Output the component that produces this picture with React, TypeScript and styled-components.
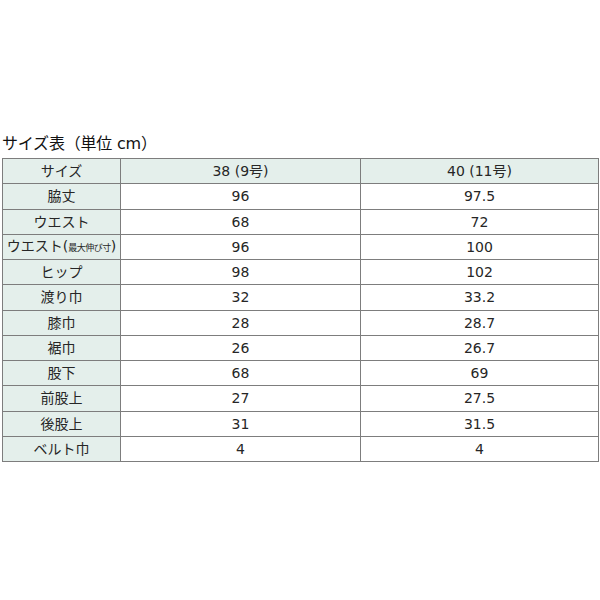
import styled, { createGlobalStyle } from "styled-components";

const GlobalStyle = createGlobalStyle`
  html, body {
    margin: 0;
    padding: 0;
    background: #fff;
  }
  body {
    font-family: "DejaVu Sans", "Noto Sans CJK JP", sans-serif;
    color: #222;
  }
`;

const Page = styled.div`
  width: 600px;
  height: 600px;
  padding: 133px 3px 0 2px;
  box-sizing: border-box;
`;

const Title = styled.h2`
  margin: 0 0 4px 0;
  font-size: 16px;
  font-weight: normal;
  line-height: 21px;
  color: #111;
  letter-spacing: -0.2px;
`;

const Table = styled.table`
  width: 596px;
  border-collapse: collapse;
  table-layout: fixed;
  font-size: 14px;
`;

const Cell = styled.td<{ $head?: boolean }>`
  height: 24.25px;
  padding: 0;
  border: 1px solid #7d7d7d;
  text-align: center;
  vertical-align: middle;
  background: ${(p) => (p.$head ? "#e4efeb" : "#fff")};
  color: #262626;
  white-space: nowrap;
  line-height: 18px;
`;

const Small = styled.span`
  font-size: 9px;
  letter-spacing: -0.5px;
`;

const rows: [React.ReactNode, string, string][] = [
  ["脇丈", "96", "97.5"],
  ["ウエスト", "68", "72"],
  [
    <>
      ウエスト(<Small>最大伸び寸</Small>)
    </>,
    "96",
    "100",
  ],
  ["ヒップ", "98", "102"],
  ["渡り巾", "32", "33.2"],
  ["膝巾", "28", "28.7"],
  ["裾巾", "26", "26.7"],
  ["股下", "68", "69"],
  ["前股上", "27", "27.5"],
  ["後股上", "31", "31.5"],
  ["ベルト巾", "4", "4"],
];

export default function App() {
  return (
    <Page>
      <GlobalStyle />
      <Title>サイズ表（単位 cm）</Title>
      <Table>
        <colgroup>
          <col style={{ width: 118 }} />
          <col style={{ width: 240 }} />
          <col style={{ width: 238 }} />
        </colgroup>
        <tbody>
          <tr>
            <Cell $head>サイズ</Cell>
            <Cell $head>38 (9号)</Cell>
            <Cell $head>40 (11号)</Cell>
          </tr>
          {rows.map(([label, a, b], i) => (
            <tr key={i}>
              <Cell $head>{label}</Cell>
              <Cell>{a}</Cell>
              <Cell>{b}</Cell>
            </tr>
          ))}
        </tbody>
      </Table>
    </Page>
  );
}
